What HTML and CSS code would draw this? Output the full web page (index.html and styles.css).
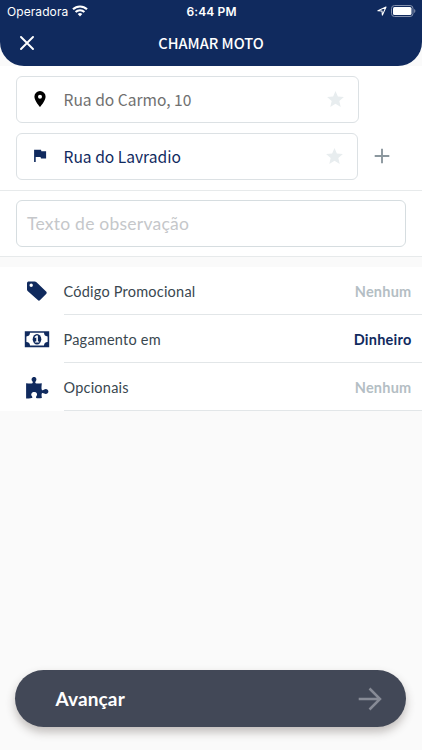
FILE: index.html
```html
<!DOCTYPE html>
<html lang="pt-BR">
<head>
<meta charset="utf-8">
<title>Chamar moto</title>
<link rel="stylesheet" href="styles.css">
</head>
<body>
<header class="header">
  <div class="status">
    <div class="carrier"><span class="carrier-name">Operadora</span>
      <svg width="16" height="12" viewBox="0 0 16 12"><g fill="none" stroke="#fff" stroke-width="2.1"><path d="M1 4.3a10 10 0 0 1 14 0"/><path d="M3.6 7.1a6.2 6.2 0 0 1 8.8 0"/></g><path fill="#fff" d="M5.7 9a3.3 3.3 0 0 1 4.6 0L8 11.4z"/></svg>
    </div>
    <span class="clock">6:44 PM</span>
    <div class="indicators">
      <svg width="10" height="10" viewBox="0 0 10 10"><path d="M.9 4.8 9 1 5.4 9.1 5 5z" fill="none" stroke="#fff" stroke-width="1.1" stroke-linejoin="round"/></svg>
      <svg width="25" height="12" viewBox="0 0 25 12"><rect x=".5" y=".5" width="21.5" height="11" rx="3" fill="none" stroke="#8491ad"/><rect x="2" y="2" width="18.5" height="8" rx="1.5" fill="#fff"/><path d="M23.2 4v4c1.6-.7 1.6-3.3 0-4z" fill="#8491ad"/></svg>
    </div>
  </div>
  <div class="navbar">
    <svg class="close" width="14" height="14" viewBox="0 0 14 14"><path d="M1 1l12 12M13 1 1 13" stroke="#fff" stroke-width="1.9" stroke-linecap="round"/></svg>
    <h1 class="title">CHAMAR MOTO</h1>
  </div>
</header>
<main>
  <section class="addresses">
    <div class="field">
      <svg class="field-icon" width="24" height="18" viewBox="0 0 24 18"><path fill="#000" fill-rule="evenodd" d="M12 1a5.6 5.6 0 0 0-5.6 5.7C6.400 10.800 12 17 12 17s5.600-6.200 5.600-10.300A5.600 5.600 0 0 0 12 1zm0 3.800a2 2 0 1 1 0 4 2 2 0 0 1 0-4z"/></svg>
      <span class="field-text origin">Rua do Carmo, 10</span>
      <svg class="star" width="17" height="16" viewBox="2 2 20 19"><path fill="#e8edef" d="M12 17.270 18.180 21l-1.640-7.030L22 9.240l-7.190-.610L12 2 9.190 8.630 2 9.240l5.460 4.730L5.820 21z"/></svg>
    </div>
    <div class="address-row">
      <div class="field field-destination">
        <svg class="field-icon" width="24" height="18" viewBox="0 0 24 18"><path fill="#102a5e" d="M6.100 2.700h6.900l.4 1.500h4.700v7.300h-5.100l-.5-1.500H7.700v5.100H6.100z"/></svg>
        <span class="field-text destination">Rua do Lavradio</span>
        <svg class="star" width="17" height="16" viewBox="2 2 20 19"><path fill="#e8edef" d="M12 17.270 18.180 21l-1.640-7.030L22 9.240l-7.190-.610L12 2 9.190 8.630 2 9.240l5.460 4.730L5.820 21z"/></svg>
      </div>
      <svg class="add" width="16" height="16" viewBox="0 0 16 16"><path d="M.7 8h14.600M8 .7v14.600" stroke="#8b979e" stroke-width="1.900"/></svg>
    </div>
  </section>
  <section class="note">
    <div class="note-field"><span class="placeholder">Texto de observação</span></div>
  </section>
  <section class="options">
    <div class="option">
      <svg class="option-icon" width="26" height="26" viewBox="0 0 26 26"><path fill="#102a5e" fill-rule="evenodd" d="M3 5.300C3 4.100 3.800 3.500 4.800 3.500h5.800c.8 0 1.300.2 1.900.7l9.600 9.300c.8.800.8 1.700 0 2.500l-6 6.100c-.7.700-1.600.7-2.300 0L3.900 13.200C3.200 12.500 3 12 3 11.200zm4.200.3a1.700 1.700 0 1 0 0 3.400 1.700 1.700 0 0 0 0-3.400z"/></svg>
      <div class="option-body"><span class="label promo">Código Promocional</span><span class="value none">Nenhum</span></div>
    </div>
    <div class="option">
      <svg class="option-icon" width="26" height="26" viewBox="0 0 26 26"><path fill="#102a5e" fill-rule="evenodd" d="M.8 5.200h24.400v16H.8zM6 6.800a3.700 3.700 0 0 1-3.600 3.600v5.600A3.700 3.700 0 0 1 6 19.600h14a3.700 3.700 0 0 1 3.600-3.600v-5.600A3.700 3.700 0 0 1 20 6.800z"/><ellipse cx="13" cy="13.200" rx="4.300" ry="5.300" fill="#102a5e"/><path fill="#fff" d="M12.300 9.600h1.600v5.800h1.300v1.200h-4.300v-1.200h1.400v-3.900l-1.300.6-.5-1z"/></svg>
      <div class="option-body"><span class="label payment">Pagamento em</span><span class="value cash">Dinheiro</span></div>
    </div>
    <div class="option">
      <svg class="option-icon" width="26" height="26" viewBox="0 0 26 26"><path fill="#102a5e" d="M2.100 9.200c2.800.2 5 .6 6.300 0 .9-.5.100-1.700-.4-2.400-1-1.600 0-3.900 2-3.900s3.100 2.200 2 3.900c-.5.800-1.200 1.900-.3 2.400 1.400.7 4 .1 6.100 0-.2 2.600-.6 5.200 0 6.600.5 1 1.600.3 2.400-.3 1.700-1.200 4.200-.2 4.200 2s-2.500 3.200-4.200 2.100c-.8-.5-1.900-1.200-2.400-.2-.5 1.100-.1 3 .1 4.600-2.100.4-3.800.5-5.100.2-1.500-.4-.6-1.700 0-2.600.9-1.500-.1-3.700-2.500-3.700s-3.700 2.200-2.700 3.800c.6.900 1.500 2 .1 2.400-1.500.5-3.700.3-5.600.3z"/></svg>
      <div class="option-body"><span class="label extras">Opcionais</span><span class="value none">Nenhum</span></div>
    </div>
  </section>
</main>
<footer class="footer">
  <button class="next"><span class="next-label">Avançar</span>
    <svg width="24" height="24" viewBox="0 0 24 24"><path d="M.7 12h21.300M11.500 1.500 22 12 11.500 22.500" fill="none" stroke="#878b96" stroke-width="2.500"/></svg>
  </button>
</footer>
</body>
</html>
```
FILE: styles.css
```css
* { box-sizing: border-box; }
body {
  margin: 0;
  height: 750px;
  overflow: hidden;
  display: flex;
  flex-direction: column;
  background: #fafafa;
  font-family: Lato, sans-serif;
}
svg { display: block; flex: none; }
span { white-space: nowrap; }
main { background: #fff; }
.header {
  height: 65.500px;
  flex: none;
  background: #102a5e;
  border-radius: 0 0 24px 24px;
  color: #fff;
}
.status {
  height: 22px;
  display: grid;
  grid-template-columns: 1fr auto 1fr;
  align-items: center;
  padding: 0 6px 0 7px;
  font: 12px Inter, sans-serif;
}
.carrier { display: flex; align-items: center; gap: 4px; }
.carrier-name { letter-spacing: 0.080px; }
.clock { font-weight: 600; letter-spacing: 0.120px; }
.indicators { display: flex; align-items: center; justify-content: flex-end; gap: 4px; }
.navbar {
  height: 43px;
  display: grid;
  grid-template-columns: 60px 1fr 60px;
  align-items: center;
}
.close { margin: -1px 0 0 20px; }
.title {
  margin: -1px 0 0;
  text-align: center;
  font: 500 14.600px/22px "Noto Sans CJK SC", sans-serif;
}
.addresses {
  height: 125px;
  padding: 10px 16px 0;
  border-bottom: 1px solid #e7eaeb;
}
.field {
  width: 343px;
  height: 47px;
  display: flex;
  align-items: center;
  border: 1.500px solid #dce1e4;
  border-radius: 6px;
  padding: 0 14px 0 11px;
}
.field-destination { width: 342px; }
.field-text {
  flex: 1;
  margin: -1px 0 0 11.500px;
  font: 15.600px/24px "Noto Sans CJK SC", sans-serif;
}
.origin { color: #707070; }
.destination { color: #102a5e; }
.address-row { display: flex; align-items: center; gap: 16px; margin-top: 10px; }
.note {
  height: 66px;
  padding: 9px 16px 0;
  border-bottom: 1px solid #e7eaeb;
}
.note-field {
  height: 47px;
  width: 390px;
  display: flex;
  align-items: center;
  border: 1.500px solid #d6dde0;
  border-radius: 6px;
  padding: 0 10px;
}
.placeholder { font-size: 17.500px; letter-spacing: 0.240px; color: #c5c7ca; }
.options { border-top: 10px solid #fafafa; }
.option { height: 48px; display: flex; align-items: center; padding-left: 24px; }
.option-body {
  flex: 1;
  height: 48px;
  margin-left: 13.500px;
  padding: 2px 10.500px 0 0;
  display: flex;
  align-items: center;
  justify-content: space-between;
  border-bottom: 1px solid #e2e6e8;
}
.label { font-size: 14.500px; letter-spacing: 0.220px; color: #39474f; }
.value { font-size: 14.500px; font-weight: 700; letter-spacing: 0.240px; }
.none { color: #b4bec4; }
.cash { color: #102a5e; }
.footer { margin-top: auto; padding: 0 15.400px 23px; }
.next {
  width: 391px;
  height: 57px;
  display: flex;
  align-items: center;
  justify-content: space-between;
  border: 0;
  border-radius: 29px;
  padding: 0 24.500px 0 40px;
  background: #424857;
  color: #fff;
  box-shadow: 0 5px 10px rgba(60, 45, 40, 0.300);
  font: 700 19px Lato, sans-serif;
}
.next-label { letter-spacing: 0.150px; }
```
